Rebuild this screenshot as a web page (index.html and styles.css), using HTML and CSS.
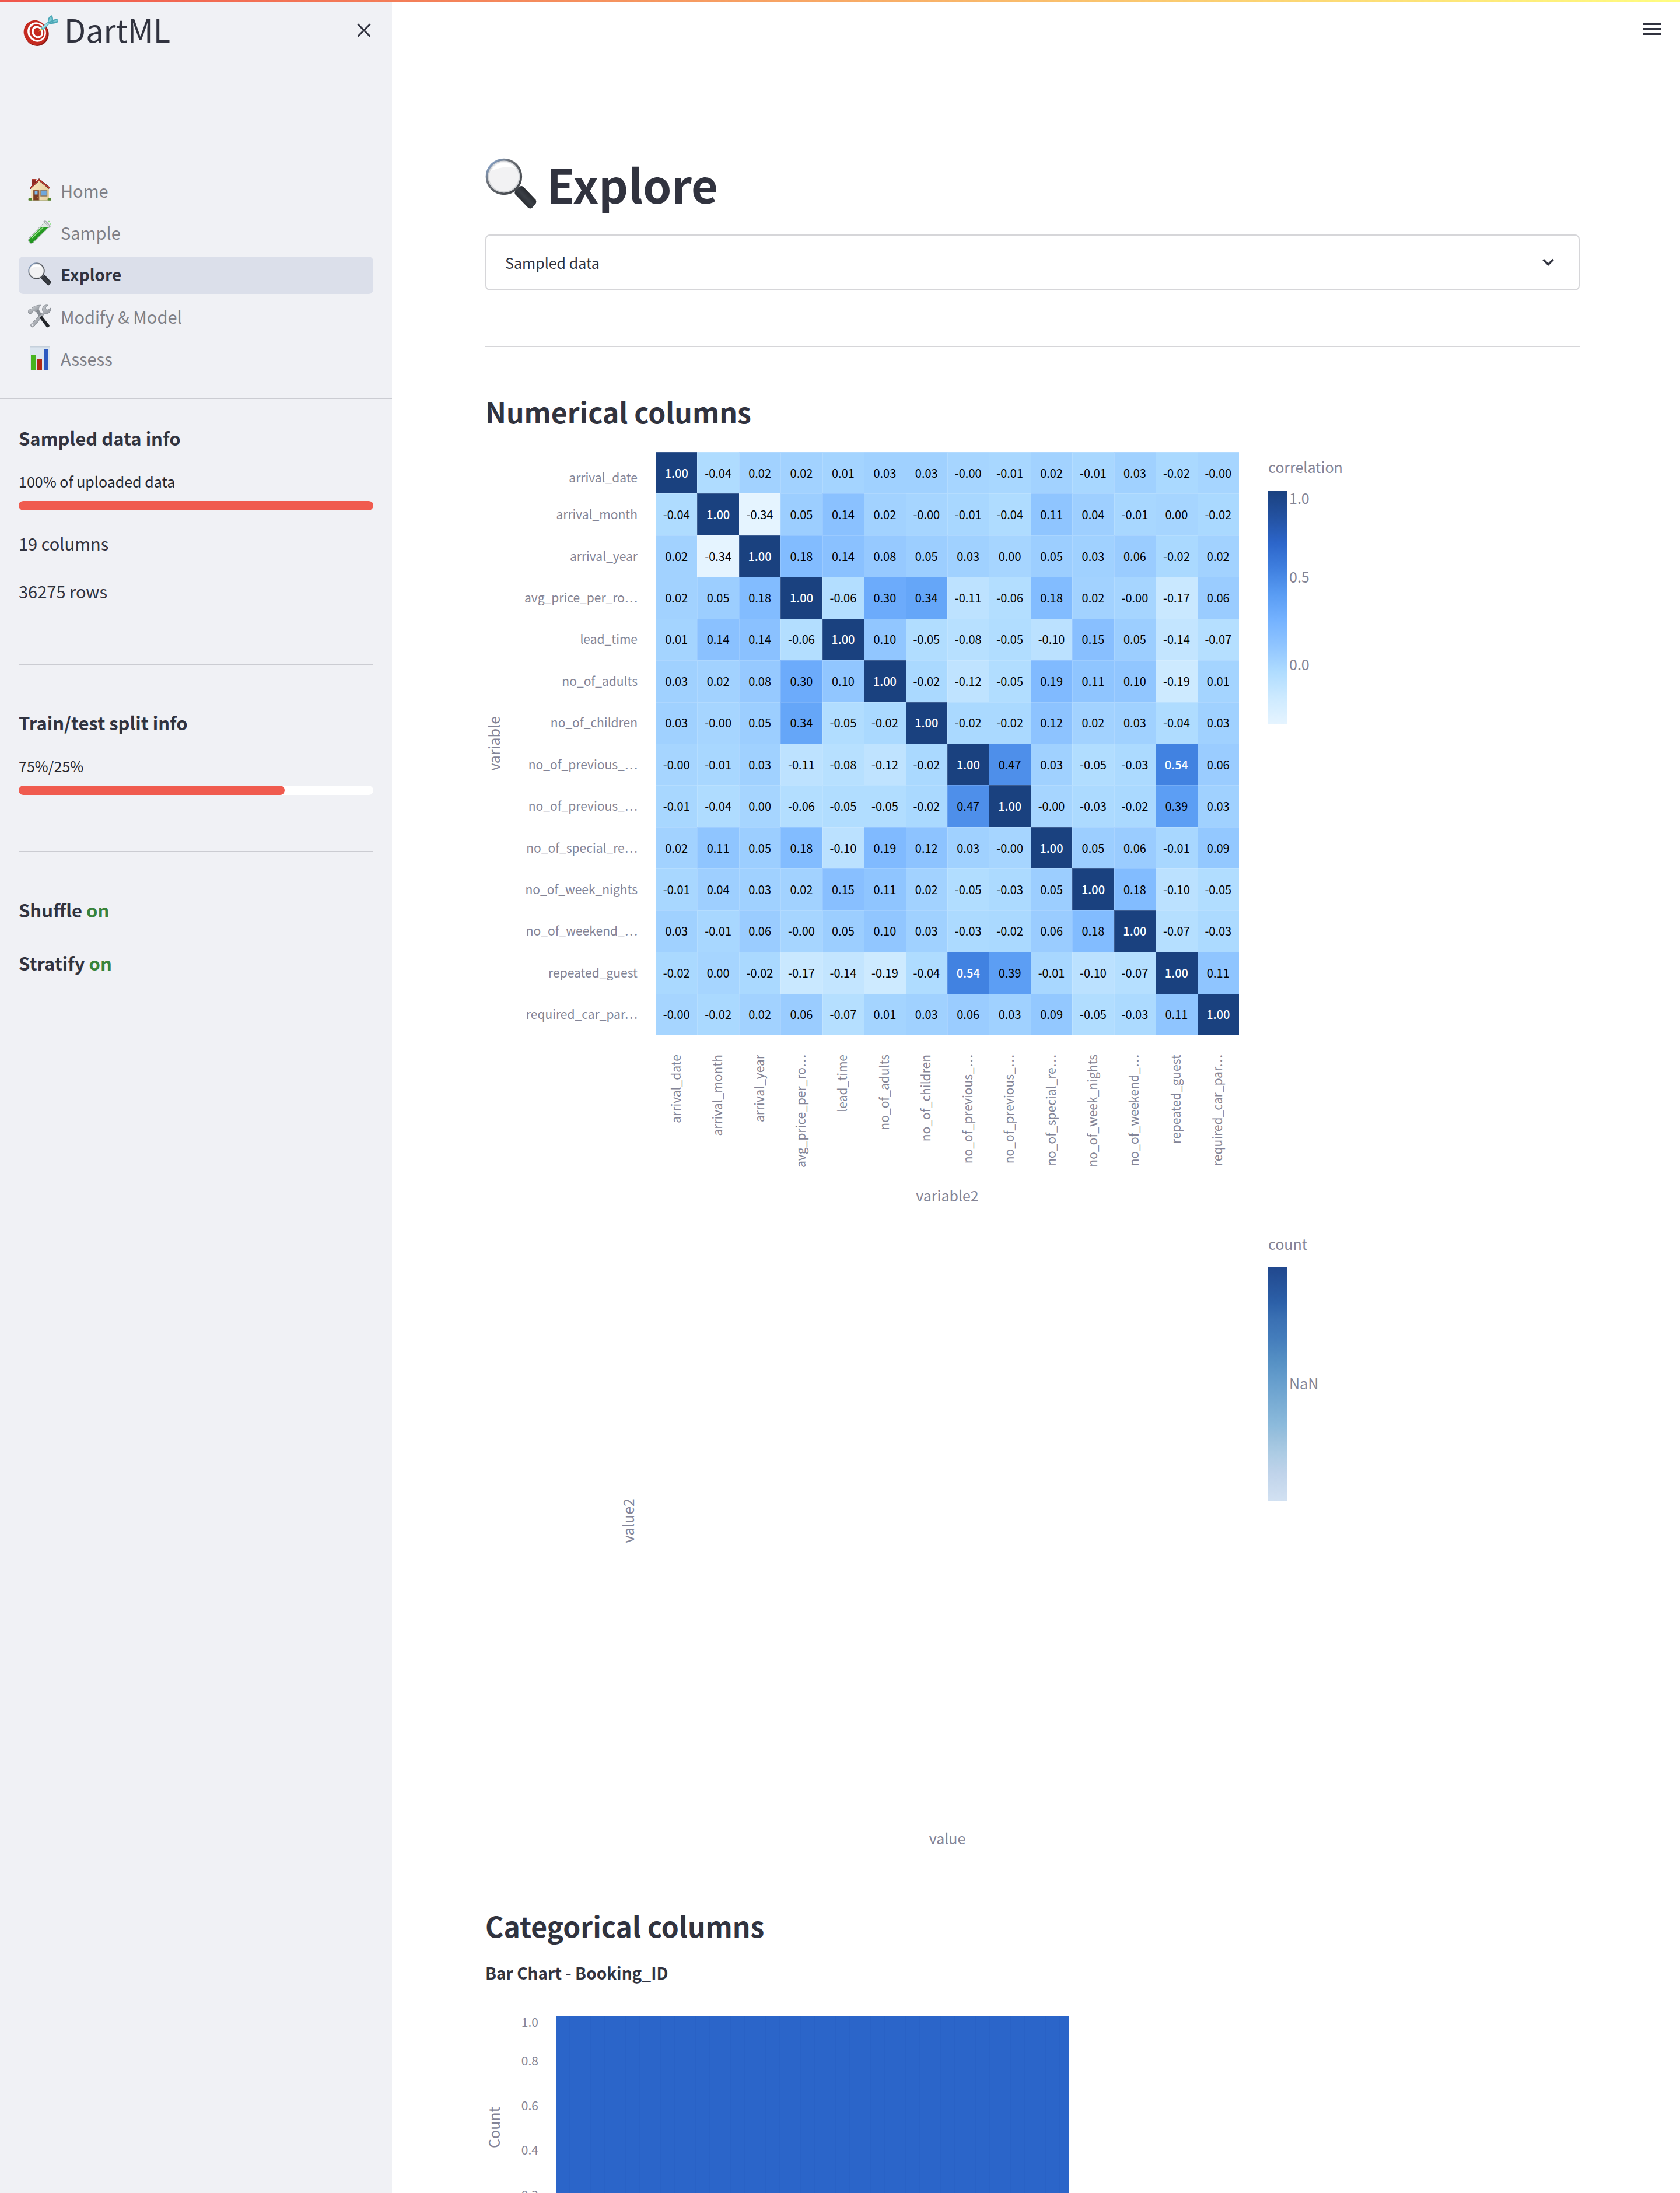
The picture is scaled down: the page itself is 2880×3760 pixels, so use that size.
FILE: index.html
```html
<!DOCTYPE html>
<html lang="en">
<head>
<meta charset="utf-8">
<title>DartML - Explore</title>
<link rel="stylesheet" href="styles.css">
</head>
<body>
<svg class="sprite" aria-hidden="true">
  <defs>
    <linearGradient id="rim" x1="0" y1="0" x2="1" y2="1"><stop offset="0" stop-color="#8fb4e6"/><stop offset=".35" stop-color="#6d7177"/><stop offset="1" stop-color="#3a3d42"/></linearGradient>
    <linearGradient id="grip" x1="0" y1="1" x2="1" y2="0"><stop offset="0" stop-color="#0c0d10"/><stop offset=".5" stop-color="#3b3f46"/><stop offset="1" stop-color="#08090b"/></linearGradient>
    <linearGradient id="wood" x1="0" y1="0" x2="1" y2="0"><stop offset="0" stop-color="#f7e5bd"/><stop offset="1" stop-color="#e6cf9f"/></linearGradient>
    <linearGradient id="steel" x1="0" y1="0" x2="1" y2="1"><stop offset="0" stop-color="#e3e6ea"/><stop offset="1" stop-color="#71767e"/></linearGradient>
    <linearGradient id="fluid" x1="0" y1="0" x2="1" y2="1"><stop offset="0" stop-color="#49c23c"/><stop offset=".6" stop-color="#1c8f1c"/><stop offset="1" stop-color="#63d851"/></linearGradient>
    <symbol id="magnifier" viewBox="0 0 40 40">
      <path d="M22 24.500 L25 21.500 L28 24.500 L25 27.500Z" fill="#8b8e93"/>
      <path d="M23.400 28.400 Q22.200 26.500 23.800 25 L26.800 22.300 Q28.400 21.200 29.800 22.500 L39.200 32.400 Q40.300 34.200 39 35.900 L36.500 38.700 Q34.800 40 33.200 38.500Z" fill="url(#grip)"/>
      <circle cx="14.500" cy="14.500" r="13.200" fill="#f2f2f3" stroke="url(#rim)" stroke-width="2"/>
      <circle cx="14.500" cy="14.500" r="12" fill="none" stroke="#d4d6d9" stroke-width="1"/>
      <path d="M4.500 10 Q8 4 14 3.500 Q20 3.500 24 8 Q16 5 4.500 10Z" fill="#fff"/>
    </symbol>
  </defs>
</svg>

<div class="app">
  <div class="decoration"></div>

  <aside class="sidebar">
    <header class="brand">
      <svg class="brand-icon" viewBox="0 0 60 60" aria-hidden="true">
        <ellipse cx="23" cy="38" rx="20.500" ry="21" fill="#8d1a14" transform="rotate(-30 23 38)"/>
        <ellipse cx="21" cy="36" rx="20" ry="21.500" fill="#c52a20" transform="rotate(-30 21 36)"/>
        <ellipse cx="23" cy="35" rx="15.500" ry="17" fill="#fff" transform="rotate(-30 23 35)"/>
        <ellipse cx="23.500" cy="35" rx="12.500" ry="14" fill="#c52a20" transform="rotate(-30 23.500 35)"/>
        <ellipse cx="24" cy="35" rx="9.500" ry="11" fill="#fff" transform="rotate(-30 24 35)"/>
        <ellipse cx="24.500" cy="35" rx="6.500" ry="7.500" fill="#c52a20" transform="rotate(-30 24.500 35)"/>
        <path d="M25 35 L32 28 L34 31Z" fill="#e8b92c"/>
        <path d="M31 27 L42 17.500 L45 21 L35 31 Q31 32 31 27Z" fill="#5fb7c4"/>
        <path d="M32 27 L43 18.500 L44 20 L34 29Z" fill="#a5e0e6"/>
        <path d="M42 18 Q42 9 48 6 Q51 7 51 14 L58 12 Q60 15 60 18 Q53 22 45 21Z" fill="#4aa6b5"/>
        <path d="M43 18 Q45 10 48 8 L49 15Z M46 19 L57 14 L59 16Z" fill="#7fcbd5"/>
      </svg>
      <span class="brand-name">DartML</span>
      <button class="icon-button close" type="button" aria-label="Close sidebar">
        <svg viewBox="0 0 24 24" width="24" height="24"><path d="M1.500 1.500 L22.500 22.500 M22.500 1.500 L1.500 22.500" stroke="#31333f" stroke-width="3" fill="none"/></svg>
      </button>
    </header>

    <nav class="nav">
      <a class="nav-item" href="#home">
        <svg class="nav-icon" viewBox="0 0 40 40" aria-hidden="true">
          <path d="M7 2 H14 V12 H7Z" fill="#8e2c25"/><path d="M6.500 1 H14.500 V3 H6.500Z" fill="#b24338"/>
          <path d="M5 15 L19 3 L36 15 V38 H5Z" fill="url(#wood)"/>
          <path d="M2.500 16.500 L19 0.500 L37.500 15.500 L36 17.500 L19 4 L4 18Z" fill="#c0392f" stroke="#501713" stroke-width=".8"/>
          <circle cx="3.500" cy="36" r="3" fill="#54862d"/><circle cx="36.500" cy="36" r="3" fill="#54862d"/>
          <path d="M9 20 H19 V38 H9Z" fill="#7b3b23" stroke="#a87a56" stroke-width="1"/><path d="M11.500 22 H16.500 V27.500 H11.500Z" fill="#7db8ea"/><path d="M15 31 H17 V32.500 H15Z" fill="#e2a648"/>
          <path d="M22 20 H32.500 V30 H22Z" fill="#6fa7dc" stroke="#8f7455" stroke-width="1.500"/>
          <path d="M2 38 H39" stroke="#8d9b6c" stroke-width="1"/>
        </svg>Home</a>
      <a class="nav-item" href="#sample">
        <svg class="nav-icon" viewBox="0 0 40 40" aria-hidden="true">
          <path d="M28 3 L37 11 L9 38 Q5 41 2 38 Q-1 34 2 30Z" fill="#dfe8e3" stroke="#9eaaa5" stroke-width="1"/>
          <path d="M23 11 L35 11.500 L9 37 Q5.500 40 3 37.500 Q.500 34 3 31Z" fill="url(#fluid)"/>
          <path d="M7 30 L26 12" stroke="#9be58f" stroke-width="1.500"/>
          <path d="M27 2 Q29 .5 31 2 L37 8.500 Q38.500 11 36.500 12.500" fill="none" stroke="#aab0b3" stroke-width="2"/>
          <circle cx="36" cy="2" r="1.300" fill="#83dc7c"/><circle cx="38" cy="6" r="1" fill="#83dc7c"/>
        </svg>Sample</a>
      <a class="nav-item active" href="#explore" aria-current="page">
        <svg class="nav-icon" aria-hidden="true"><use href="#magnifier"/></svg>Explore</a>
      <a class="nav-item" href="#modify">
        <svg class="nav-icon" viewBox="0 0 40 40" aria-hidden="true">
          <path d="M12 9 L17 6 L24 18 L19 21Z" fill="#878c93"/>
          <path d="M26 13 Q22 7 28 2 Q31 0 34 1 L30 6 L33 9.500 L39 6 Q40 12 35 15 Q31 17 28.500 15.500 L12 36 Q8 41 5 37.500 Q3 34 8 31Z" fill="url(#steel)" stroke="#7a7f87" stroke-width=".7"/>
          <circle cx="8" cy="35.500" r="1.600" fill="#f0f1f5"/>
          <path d="M0 13 Q0 9 5 8 Q10 1 23 1 Q18 4 18 9 L14 13 Q10 10 8 12 Q7 16 3 16Z" fill="url(#steel)" stroke="#7a7f87" stroke-width=".7"/>
          <path d="M23.500 19 L37 36 Q36 40 32 39 L20 23Z" fill="#23262a"/>
        </svg>Modify &amp; Model</a>
      <a class="nav-item" href="#assess">
        <svg class="nav-icon" viewBox="0 0 40 40" aria-hidden="true">
          <path d="M3 0 H37 V40 H3Z" fill="#dbe5ef"/><path d="M3 0 H37 V1.500 H3Z" fill="#c5d0db"/>
          <path d="M5 14 H13 V40 H5Z" fill="#46b41f"/><path d="M16 21 H24 V40 H16Z" fill="#b02815"/><path d="M27 5 H35 V40 H27Z" fill="#2a58c0"/>
        </svg>Assess</a>
    </nav>

    <section class="panel">
      <h5>Sampled data info</h5>
      <p class="bar-label" id="sampled-label">100% of uploaded data</p>
      <div class="progress" role="progressbar" aria-labelledby="sampled-label" aria-valuenow="100"><div class="progress-fill" style="width:100%"></div></div>
      <p class="fact">19 columns</p>
      <p class="fact">36275 rows</p>
    </section>
    <hr>
    <section class="panel">
      <h5>Train/test split info</h5>
      <p class="bar-label" id="split-label">75%/25%</p>
      <div class="progress" role="progressbar" aria-labelledby="split-label" aria-valuenow="75"><div class="progress-fill" style="width:75%"></div></div>
    </section>
    <hr>
    <section class="panel">
      <h5>Shuffle <span class="on">on</span></h5>
      <h5>Stratify <span class="on">on</span></h5>
    </section>
  </aside>

  <main class="main">
    <button class="icon-button menu" type="button" aria-label="Menu">
      <svg viewBox="0 0 30 20" width="30" height="20"><path d="M0 0H30V3H0Z M0 8H30V12H0Z M0 17H30V20H0Z" fill="#31333f"/></svg>
    </button>

    <h1><svg class="title-icon" aria-hidden="true"><use href="#magnifier"/></svg>Explore</h1>

    <details class="expander">
      <summary>Sampled data
        <svg viewBox="0 0 20 14" width="20" height="14" aria-hidden="true"><path d="M1.500 2 L10 10.500 L18.500 2" stroke="#31333f" stroke-width="3.500" fill="none"/></svg>
      </summary>
    </details>
    <hr>

    <h3>Numerical columns</h3>

    <figure class="chart heat">
      <div class="y-title"><span class="vertical">variable</span></div>
      <div class="y-labels" id="y-labels"></div>
      <div class="plot cells" id="cells"></div>
      <div class="legend">
        <div class="legend-title">correlation</div>
        <div class="scale">
          <div class="ramp ramp-correlation"></div>
          <div class="ticks ticks-correlation"><span>1.0</span><span>0.5</span><span>0.0</span></div>
        </div>
      </div>
      <div class="x-labels" id="x-labels"></div>
      <div class="x-title">variable2</div>
    </figure>

    <figure class="chart hist">
      <div class="y-title"><span class="vertical">value2</span></div>
      <div class="plot"></div>
      <div class="legend">
        <div class="legend-title">count</div>
        <div class="scale">
          <div class="ramp ramp-count"></div>
          <div class="ticks ticks-count"><span>NaN</span></div>
        </div>
      </div>
      <div class="x-title">value</div>
    </figure>

    <h3>Categorical columns</h3>
    <h6>Bar Chart - Booking_ID</h6>
    <figure class="bars">
      <div class="y-title"><span class="vertical">Count</span></div>
      <div class="bar-ticks"><span>1.0</span><span>0.8</span><span>0.6</span><span>0.4</span><span>0.2</span><span>0.0</span></div>
      <div class="bar-plot"></div>
    </figure>
  </main>
</div>
<script src="script.js"></script>
</body>
</html>
```
FILE: styles.css
```css
* { box-sizing: border-box; }

body {
  margin: 0;
  color: #31333f;
  background: #fff;
  font-family: "Noto Sans CJK SC", "Noto Sans", sans-serif;
  font-size: 29px;
  line-height: 51px;
}

h1, h3, h5, h6, p, figure { margin: 0; }

hr {
  height: 2px;
  margin: 95px 0 76px;
  border: 0;
  background: #d6d6d9;
}

a { color: inherit; text-decoration: none; }

.sprite { position: absolute; width: 0; height: 0; }

.app { display: flex; height: 100vh; overflow: hidden; }

.decoration {
  position: absolute;
  top: 0;
  left: 0;
  right: 0;
  height: 4px;
  background: linear-gradient(90deg, #f0564c, #fffd80);
}

.icon-button {
  display: flex;
  padding: 0;
  border: 0;
  background: none;
}

/* Sidebar */

.sidebar {
  flex: 0 0 672px;
  background: #f0f1f5;
}

.brand {
  display: flex;
  align-items: center;
  padding: 10px 36px 0 40px;
  line-height: 80px;
}

.brand-icon { width: 60px; height: 60px; margin-right: 10px; }
.brand-name { font-size: 54px; }
.close { margin: 4px 0 0 auto; }

.nav {
  display: flex;
  flex-direction: column;
  gap: 8px;
  margin-top: 206px;
  padding: 0 32px 34px;
  border-bottom: 2px solid #cbccd2;
}

.nav-item {
  display: flex;
  align-items: center;
  gap: 16px;
  height: 64px;
  padding: 0 16px 4px;
  border-radius: 8px;
  color: #7f8087;
}

.nav-item.active {
  color: #31333f;
  background: #dbdfea;
  font-size: 28px;
  font-weight: 600;
}

.nav-icon { width: 40px; height: 40px; }

.sidebar hr { margin: 96px 32px 75px; background: #cbccd2; }

.panel { padding: 0 32px; }
.nav + .panel { padding: 43px 32px 3px; }

h5 { font-size: 31px; font-weight: 600; line-height: 48px; }
h5 + h5 { margin-top: 43px; }

.on { color: #37833b; }

.bar-label { margin-top: 30px; color: #262730; font-size: 25px; line-height: 40px; }

.progress {
  height: 16px;
  margin-top: 14px;
  border-radius: 8px;
  background: #fff;
}

.progress-fill { height: 100%; border-radius: 8px; background: #f05b4f; }

.fact { margin-top: 31px; }

/* Main column */

.main {
  position: relative;
  flex: 1;
  min-width: 0;
  padding: 262px 172px 0 160px;
}

.menu { position: absolute; top: 40px; right: 33px; }

h1 {
  display: flex;
  align-items: center;
  gap: 17px;
  font-size: 79px;
  font-weight: 700;
  line-height: 106px;
}

.title-icon { width: 88px; height: 88px; }

.expander {
  margin-top: 34px;
  border: 2px solid #d6d6d9;
  border-radius: 8px;
}

.expander summary {
  display: flex;
  align-items: center;
  justify-content: space-between;
  height: 92px;
  padding: 0 42px 0 32px;
  font-size: 25px;
  list-style: none;
}

h3 { font-size: 48px; font-weight: 600; line-height: 68px; }
h6 { margin-top: 27px; font-size: 28px; font-weight: 600; line-height: 40px; }

/* Charts */

.chart, .bars { color: #838496; font-size: 21px; line-height: 28px; }

.chart { display: grid; width: 1476px; }

.heat {
  grid-template: 1000px auto auto / 28px 264px 1000px 1fr;
  margin-top: 36px;
}

.hist {
  grid-template: 1000px auto / 292px 1000px 1fr;
  margin-top: 38px;
}

.y-title { display: flex; align-items: center; font-size: 25px; }
.hist .y-title { justify-content: flex-end; padding-right: 34px; }

.vertical { writing-mode: vertical-rl; transform: rotate(180deg); }

.y-labels {
  display: grid;
  grid-template-rows: repeat(14, 1fr);
  align-items: center;
  justify-items: end;
  padding-right: 31px;
}

.y-labels span { padding-bottom: 2px; }
.y-labels span:first-child { padding-top: 16px; }

.cells {
  display: grid;
  grid-template: repeat(14, 1fr) / repeat(14, 1fr);
}

.cell {
  display: flex;
  align-items: center;
  justify-content: center;
  box-shadow: inset 1px 1px 0 rgba(255, 255, 255, .15);
  color: #000;
  font-size: 20px;
}

.cell.light { color: #fff; font-weight: 500; }

.x-labels {
  display: grid;
  grid-template-columns: repeat(14, 1fr);
  grid-column: 3;
  justify-items: center;
  align-items: start;
  height: 254px;
  padding-top: 33px;
}

.x-labels span { padding-left: 4px; }

.x-title {
  font-size: 25px;
  line-height: 40px;
  text-align: center;
}

.heat .x-title { grid-column: 3; }
.hist .x-title { grid-column: 2; margin-top: 24px; }

.legend { padding: 5px 0 0 50px; font-size: 25px; }
.legend-title { line-height: 40px; }
.scale { display: flex; gap: 4px; margin-top: 21px; }
.ramp { width: 32px; height: 400px; }

.ramp-correlation {
  background: linear-gradient(#1a417f, #2351a0, #2c65c9, #3f7fdf, #599cf3, #74b2ff, #90c5ff, #afdcff, #cdeaff, #e5f4ff);
}

.ramp-count {
  background: linear-gradient(#21488e, #2c60a8 15%, #3a70b3 22%, #437cbb 30%, #5590c4 40%, #69a0ce 50%, #7dafd5 60%, #8dbbdc 68%, #99c0dd 72%, #adcce4 80%, #bfd3ea 88%, #d2e1f2);
}

.ticks { display: grid; align-items: center; }
.ticks-correlation { grid-template-rows: 72px 150px 150px; align-content: start; }
.ticks-correlation span:first-child { align-self: start; line-height: 24px; }
.ticks-count { padding-bottom: 4px; }

.hist + h3 { margin-top: 96px; }

.bars {
  display: grid;
  grid-template: 382px / 28px 94px 878px;
  margin-top: 54px;
}

.bar-ticks {
  display: flex;
  flex-direction: column;
  align-items: flex-end;
  padding-right: 31px;
}

.bar-ticks span { display: flex; flex: 2; align-items: center; }
.bar-ticks span:first-child { flex: 1; align-items: flex-start; line-height: 20px; }
.bar-ticks span:last-child { flex: 1; align-items: flex-end; }

.bar-plot {
  background: repeating-linear-gradient(90deg, #2b65c9 0 22px, #2962c6 22px 24px, #2b65c9 24px 58px, #2962c6 58px 60px);
}
```
FILE: script.js
```js
const names = [
  "arrival_date", "arrival_month", "arrival_year", "avg_price_per_ro…",
  "lead_time", "no_of_adults", "no_of_children", "no_of_previous_…",
  "no_of_previous_…", "no_of_special_re…", "no_of_week_nights",
  "no_of_weekend_…", "repeated_guest", "required_car_par…",
];

// Lower triangle of the symmetric correlation matrix.
const lower = [
  ["1.00"],
  ["-0.04", "1.00"],
  ["0.02", "-0.34", "1.00"],
  ["0.02", "0.05", "0.18", "1.00"],
  ["0.01", "0.14", "0.14", "-0.06", "1.00"],
  ["0.03", "0.02", "0.08", "0.30", "0.10", "1.00"],
  ["0.03", "-0.00", "0.05", "0.34", "-0.05", "-0.02", "1.00"],
  ["-0.00", "-0.01", "0.03", "-0.11", "-0.08", "-0.12", "-0.02", "1.00"],
  ["-0.01", "-0.04", "0.00", "-0.06", "-0.05", "-0.05", "-0.02", "0.47", "1.00"],
  ["0.02", "0.11", "0.05", "0.18", "-0.10", "0.19", "0.12", "0.03", "-0.00", "1.00"],
  ["-0.01", "0.04", "0.03", "0.02", "0.15", "0.11", "0.02", "-0.05", "-0.03", "0.05", "1.00"],
  ["0.03", "-0.01", "0.06", "-0.00", "0.05", "0.10", "0.03", "-0.03", "-0.02", "0.06", "0.18", "1.00"],
  ["-0.02", "0.00", "-0.02", "-0.17", "-0.14", "-0.19", "-0.04", "0.54", "0.39", "-0.01", "-0.10", "-0.07", "1.00"],
  ["-0.00", "-0.02", "0.02", "0.06", "-0.07", "0.01", "0.03", "0.06", "0.03", "0.09", "-0.05", "-0.03", "0.11", "1.00"],
];

const stops = [
  [229, 244, 255], [205, 234, 255], [175, 220, 255], [144, 197, 255], [116, 178, 255],
  [89, 156, 243], [63, 127, 223], [44, 101, 201], [35, 81, 160], [26, 65, 127],
];

function colour(value) {
  const t = Math.min(1, Math.max(0, (value + 0.34) / 1.34)) * (stops.length - 1);
  const i = Math.min(stops.length - 2, Math.floor(t));
  const mix = stops[i].map((c, k) => Math.round(c + (stops[i + 1][k] - c) * (t - i)));
  return `rgb(${mix.join(",")})`;
}

function add(parent, className, text) {
  const el = document.createElement(parent.id === "cells" ? "div" : "span");
  el.className = className;
  el.textContent = text;
  parent.append(el);
  return el;
}

const yLabels = document.getElementById("y-labels");
const xLabels = document.getElementById("x-labels");
const cells = document.getElementById("cells");

names.forEach((name, row) => {
  add(yLabels, "label", name);
  add(xLabels, "label vertical", name);
  names.forEach((_, col) => {
    const text = row >= col ? lower[row][col] : lower[col][row];
    const value = parseFloat(text);
    add(cells, value > 0.5 ? "cell light" : "cell", text).style.background = colour(value);
  });
});
```
